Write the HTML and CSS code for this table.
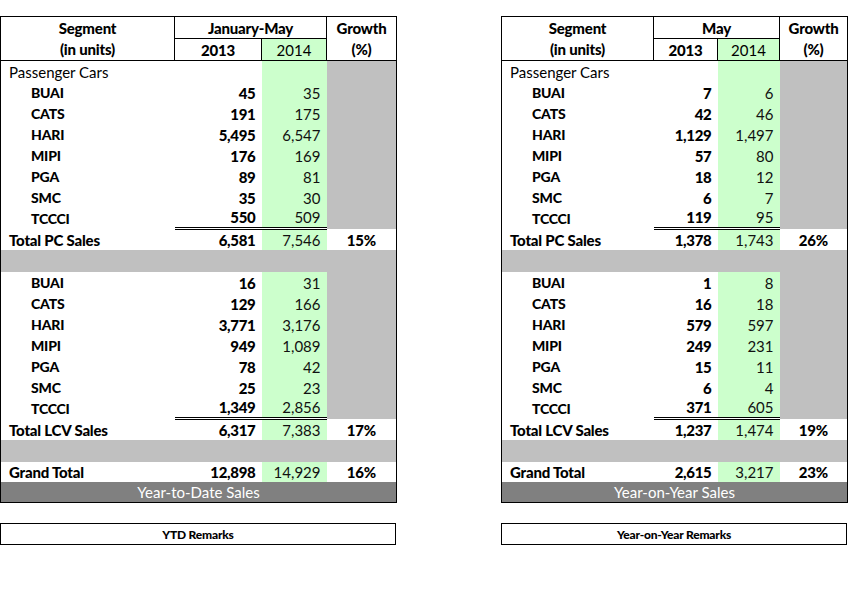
FILE: index.html
```html
<!DOCTYPE html>
<html lang="en">
<head>
<meta charset="utf-8">
<title>Vehicle Sales</title>
<link rel="stylesheet" href="styles.css">
</head>
<body>
<div class="page">
  <section class="panel panel-ytd">
    <table class="sales">
      <colgroup><col class="c-seg"><col class="c-y1"><col class="c-y2"><col class="c-gr"></colgroup>
      <thead>
        <tr class="h1"><th class="seg">Segment</th><th colspan="2" class="period">January-May</th><th class="gr">Growth</th></tr>
        <tr class="h2"><th class="seg">(in units)</th><th class="y1">2013</th><th class="y2">2014</th><th class="gr">(%)</th></tr>
      </thead>
      <tbody>
        <tr class="cat"><td class="name">Passenger Cars</td><td></td><td class="y2"></td><td class="shade"></td></tr>
        <tr class="item"><td class="name">BUAI</td><td class="y1">45</td><td class="y2">35</td><td class="shade"></td></tr>
        <tr class="item"><td class="name">CATS</td><td class="y1">191</td><td class="y2">175</td><td class="shade"></td></tr>
        <tr class="item"><td class="name">HARI</td><td class="y1">5,495</td><td class="y2">6,547</td><td class="shade"></td></tr>
        <tr class="item"><td class="name">MIPI</td><td class="y1">176</td><td class="y2">169</td><td class="shade"></td></tr>
        <tr class="item"><td class="name">PGA</td><td class="y1">89</td><td class="y2">81</td><td class="shade"></td></tr>
        <tr class="item"><td class="name">SMC</td><td class="y1">35</td><td class="y2">30</td><td class="shade"></td></tr>
        <tr class="item last"><td class="name">TCCCI</td><td class="y1">550</td><td class="y2">509</td><td class="shade"></td></tr>
        <tr class="total"><td class="name">Total PC Sales</td><td class="y1">6,581</td><td class="y2">7,546</td><td class="gr">15%</td></tr>
        <tr class="band"><td colspan="4"></td></tr>
        <tr class="item"><td class="name">BUAI</td><td class="y1">16</td><td class="y2">31</td><td class="shade"></td></tr>
        <tr class="item"><td class="name">CATS</td><td class="y1">129</td><td class="y2">166</td><td class="shade"></td></tr>
        <tr class="item"><td class="name">HARI</td><td class="y1">3,771</td><td class="y2">3,176</td><td class="shade"></td></tr>
        <tr class="item"><td class="name">MIPI</td><td class="y1">949</td><td class="y2">1,089</td><td class="shade"></td></tr>
        <tr class="item"><td class="name">PGA</td><td class="y1">78</td><td class="y2">42</td><td class="shade"></td></tr>
        <tr class="item"><td class="name">SMC</td><td class="y1">25</td><td class="y2">23</td><td class="shade"></td></tr>
        <tr class="item last"><td class="name">TCCCI</td><td class="y1">1,349</td><td class="y2">2,856</td><td class="shade"></td></tr>
        <tr class="total"><td class="name">Total LCV Sales</td><td class="y1">6,317</td><td class="y2">7,383</td><td class="gr">17%</td></tr>
        <tr class="band"><td colspan="4"></td></tr>
        <tr class="total grand"><td class="name">Grand Total</td><td class="y1">12,898</td><td class="y2">14,929</td><td class="gr">16%</td></tr>
        <tr class="caption"><td colspan="4">Year-to-Date Sales</td></tr>
      </tbody>
    </table>
    <div class="remarks">YTD Remarks</div>
  </section>

  <section class="panel panel-yoy">
    <table class="sales">
      <colgroup><col class="c-seg"><col class="c-y1"><col class="c-y2"><col class="c-gr"></colgroup>
      <thead>
        <tr class="h1"><th class="seg">Segment</th><th colspan="2" class="period">May</th><th class="gr">Growth</th></tr>
        <tr class="h2"><th class="seg">(in units)</th><th class="y1">2013</th><th class="y2">2014</th><th class="gr">(%)</th></tr>
      </thead>
      <tbody>
        <tr class="cat"><td class="name">Passenger Cars</td><td></td><td class="y2"></td><td class="shade"></td></tr>
        <tr class="item"><td class="name">BUAI</td><td class="y1">7</td><td class="y2">6</td><td class="shade"></td></tr>
        <tr class="item"><td class="name">CATS</td><td class="y1">42</td><td class="y2">46</td><td class="shade"></td></tr>
        <tr class="item"><td class="name">HARI</td><td class="y1">1,129</td><td class="y2">1,497</td><td class="shade"></td></tr>
        <tr class="item"><td class="name">MIPI</td><td class="y1">57</td><td class="y2">80</td><td class="shade"></td></tr>
        <tr class="item"><td class="name">PGA</td><td class="y1">18</td><td class="y2">12</td><td class="shade"></td></tr>
        <tr class="item"><td class="name">SMC</td><td class="y1">6</td><td class="y2">7</td><td class="shade"></td></tr>
        <tr class="item last"><td class="name">TCCCI</td><td class="y1">119</td><td class="y2">95</td><td class="shade"></td></tr>
        <tr class="total"><td class="name">Total PC Sales</td><td class="y1">1,378</td><td class="y2">1,743</td><td class="gr">26%</td></tr>
        <tr class="band"><td colspan="4"></td></tr>
        <tr class="item"><td class="name">BUAI</td><td class="y1">1</td><td class="y2">8</td><td class="shade"></td></tr>
        <tr class="item"><td class="name">CATS</td><td class="y1">16</td><td class="y2">18</td><td class="shade"></td></tr>
        <tr class="item"><td class="name">HARI</td><td class="y1">579</td><td class="y2">597</td><td class="shade"></td></tr>
        <tr class="item"><td class="name">MIPI</td><td class="y1">249</td><td class="y2">231</td><td class="shade"></td></tr>
        <tr class="item"><td class="name">PGA</td><td class="y1">15</td><td class="y2">11</td><td class="shade"></td></tr>
        <tr class="item"><td class="name">SMC</td><td class="y1">6</td><td class="y2">4</td><td class="shade"></td></tr>
        <tr class="item last"><td class="name">TCCCI</td><td class="y1">371</td><td class="y2">605</td><td class="shade"></td></tr>
        <tr class="total"><td class="name">Total LCV Sales</td><td class="y1">1,237</td><td class="y2">1,474</td><td class="gr">19%</td></tr>
        <tr class="band"><td colspan="4"></td></tr>
        <tr class="total grand"><td class="name">Grand Total</td><td class="y1">2,615</td><td class="y2">3,217</td><td class="gr">23%</td></tr>
        <tr class="caption"><td colspan="4">Year-on-Year Sales</td></tr>
      </tbody>
    </table>
    <div class="remarks">Year-on-Year Remarks</div>
  </section>
</div>
</body>
</html>
```

FILE: styles.css
```css
* { box-sizing: border-box; }

html, body {
  margin: 0;
  padding: 0;
  background: #ffffff;
}

body {
  font-family: Lato, "Open Sans", "Liberation Sans", sans-serif;
  color: #000;
}

.page {
  display: flex;
  gap: 105px;
  padding-top: 16px;
  align-items: flex-start;
}

.panel-ytd { width: 396px; }
.panel-yoy { width: 346px; }

.sales {
  width: 100%;
  border-collapse: collapse;
  table-layout: fixed;
  border: 1px solid #000;
  font-size: 15px;
}

.panel-ytd .c-seg { width: 174px; }
.panel-ytd .c-y1 { width: 87px; }
.panel-ytd .c-y2 { width: 65px; }
.panel-ytd .c-gr { width: 70px; }

.panel-yoy .c-seg { width: 152px; }
.panel-yoy .c-y1 { width: 64px; }
.panel-yoy .c-y2 { width: 62px; }
.panel-yoy .c-gr { width: 68px; }

.sales th,
.sales td {
  padding: 0;
  white-space: nowrap;
  overflow: hidden;
  line-height: 18px;
}

/* header */
.sales thead tr { height: 22px; }
.sales th {
  font-weight: 900;
  text-align: center;
  letter-spacing: -0.2px;
}
.h1 .seg { border-right: 1px solid #000; }
.h1 .period { border-right: 1px solid #000; border-bottom: 1px solid #000; }
.h2 th { border-bottom: 1px solid #000; }
.h2 .seg, .h2 .y1, .h2 .y2 { border-right: 1px solid #000; }
.h2 .y2 { background: #ccffcc; font-weight: 400; letter-spacing: 0; }

/* body */
.sales tbody tr { height: 21px; }
.sales tbody tr.band { height: 22px; }
.sales tbody tr.grand { height: 20px; }

.sales tbody td {
  vertical-align: bottom;
  padding-bottom: 1px;
}

.sales td.y2 { background: #ccffcc; }
.sales td.shade { background: #c0c0c0; }

.sales td.y1,
.sales td.y2 {
  text-align: right;
  padding-right: 6px;
}
.sales td.y1 { font-weight: 900; letter-spacing: -0.3px; }
.sales td.y2 { font-weight: 400; color: #111; }

.cat .name { padding-left: 8px; font-weight: 400; }
.item .name {
  padding-left: 30px;
  font-size: 14px;
  font-weight: 900;
  letter-spacing: -0.2px;
}

.item.last td.y1,
.item.last td.y2 { border-bottom: 3px double #000; }

.total .name { padding-left: 8px; font-weight: 900; letter-spacing: -0.2px; }
.total td.gr { text-align: center; font-weight: 900; letter-spacing: -0.2px; }

.band td { background: #c0c0c0; }

.caption td {
  background: #808080;
  color: #ffffff;
  text-align: center;
  font-weight: 400;
  font-size: 15px;
}

.remarks {
  margin-top: 20px;
  height: 22px;
  border: 1px solid #000;
  display: flex;
  align-items: center;
  justify-content: center;
  font-size: 12px;
  font-weight: 900;
  letter-spacing: -0.2px;
}
```
